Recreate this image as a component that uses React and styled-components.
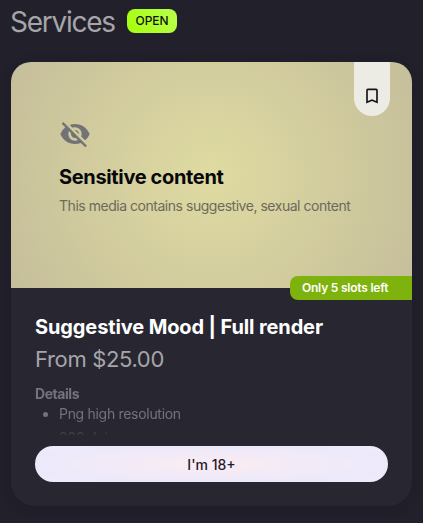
import React from 'react';
import styled, { createGlobalStyle } from 'styled-components';
import { MdBookmarkBorder, MdVisibilityOff } from 'react-icons/md';

const GlobalStyle = createGlobalStyle`
  * {
    box-sizing: border-box;
  }

  body {
    margin: 0;
    background: #21202b;
    font-family: Inter, 'Liberation Sans', sans-serif;
    overflow: hidden;
  }
`;

const Page = styled.main`
  width: 423px;
  height: 523px;
  padding: 6px 11px 0;
`;

const Header = styled.header`
  display: flex;
  align-items: center;
  gap: 12px;
  height: 30px;
`;

const Title = styled.h1`
  width: 105px;
  margin: 0 0 0 -1px;
  padding-top: 2px;
  font-size: 28px;
  font-weight: 400;
  line-height: 30px;
  letter-spacing: -1.25px;
  color: #a5a5aa;
  white-space: nowrap;
`;

const StatusTag = styled.span`
  width: 50px;
  height: 24px;
  border-radius: 8px;
  background: linear-gradient(65deg, #a6ff0d, #b9ff4d);
  color: #10130a;
  font-size: 12px;
  font-weight: 500;
  line-height: 24px;
  letter-spacing: -0.1px;
  text-align: center;
`;

const Card = styled.article`
  display: flex;
  flex-direction: column;
  width: 401px;
  height: 444px;
  margin-top: 26px;
  border-radius: 24px;
  background: #282731;
  box-shadow: 0 2px 12px rgba(20, 19, 30, 0.25);
`;

const Media = styled.div`
  position: relative;
  height: 226px;
  padding: 56px 48px 0;
  border-radius: 20px 20px 0 0;
  background: radial-gradient(circle at 50% 50%, #dfdba1 0%, #c5be9b 100%);
`;

const HiddenIcon = styled(MdVisibilityOff)`
  display: block;
  font-size: 32px;
  color: #737375;
`;

const MediaTitle = styled.h2`
  margin: 14px 0 0;
  font-size: 20px;
  font-weight: 700;
  line-height: 26px;
  letter-spacing: -0.35px;
  color: #08080c;
  white-space: nowrap;
`;

const MediaText = styled.p`
  margin: 6px 0 0;
  font-size: 14px;
  line-height: 20px;
  letter-spacing: -0.47px;
  color: #6d6a5b;
  white-space: nowrap;
`;

const SaveButton = styled.button`
  position: absolute;
  top: 0;
  right: 22px;
  display: flex;
  justify-content: center;
  align-items: flex-end;
  width: 36px;
  height: 54px;
  padding: 0 0 10px;
  border: none;
  border-radius: 0 0 18px 18px;
  background: #ecece4;
  color: #15141c;
  font-size: 20px;
`;

const SlotsBadge = styled.span`
  position: absolute;
  right: 0;
  bottom: -12px;
  width: 122px;
  height: 24px;
  padding-left: 12px;
  border-radius: 8px 0 0 8px;
  background: #7eb20c;
  color: #fff;
  font-size: 12px;
  font-weight: 600;
  line-height: 24px;
  letter-spacing: -0.22px;
  white-space: nowrap;
`;

const Content = styled.div`
  display: flex;
  flex-direction: column;
  padding: 26px 24px 24px;
`;

const ServiceName = styled.h2`
  margin: 0;
  font-size: 20px;
  font-weight: 700;
  line-height: 26px;
  letter-spacing: -0.12px;
  color: #fff;
  white-space: nowrap;
`;

const Price = styled.p`
  margin: 4px 0 0;
  font-size: 22px;
  line-height: 30px;
  letter-spacing: -0.35px;
  color: #a5a5aa;
`;

const Details = styled.section`
  height: 49px;
  margin: 12px 0 11px;
  overflow: hidden;
  font-size: 14px;
  color: #74737b;
  mask-image: linear-gradient(#000 32px, transparent 54px);
`;

const DetailsTitle = styled.h3`
  margin: 0;
  font-size: 14px;
  font-weight: 700;
  line-height: 16px;
  letter-spacing: -0.45px;
`;

const DetailsList = styled.ul`
  margin: 0;
  padding-left: 24px;
  line-height: 24px;
  letter-spacing: -0.3px;
`;

const ConfirmButton = styled.button`
  height: 36px;
  border: none;
  border-radius: 18px;
  background: radial-gradient(ellipse at center, #fbecf2 0%, #ece9fb 72%, #f0e9fb 100%);
  color: #1c1a2b;
  font-family: inherit;
  font-size: 14px;
  font-weight: 500;
`;

function ServiceCard() {
  return (
    <Card>
      <Media>
        <HiddenIcon />
        <MediaTitle>Sensitive content</MediaTitle>
        <MediaText>This media contains suggestive, sexual content</MediaText>
        <SaveButton aria-label="Save"><MdBookmarkBorder /></SaveButton>
        <SlotsBadge>Only 5 slots left</SlotsBadge>
      </Media>
      <Content>
        <ServiceName>Suggestive Mood | Full render</ServiceName>
        <Price>From $25.00</Price>
        <Details>
          <DetailsTitle>Details</DetailsTitle>
          <DetailsList>
            <li>Png high resolution</li>
            <li>300 dpi</li>
          </DetailsList>
        </Details>
        <ConfirmButton>I'm 18+</ConfirmButton>
      </Content>
    </Card>
  );
}

function App() {
  return (
    <Page>
      <GlobalStyle />
      <Header>
        <Title>Services</Title>
        <StatusTag>OPEN</StatusTag>
      </Header>
      <ServiceCard />
    </Page>
  );
}

export default App;
